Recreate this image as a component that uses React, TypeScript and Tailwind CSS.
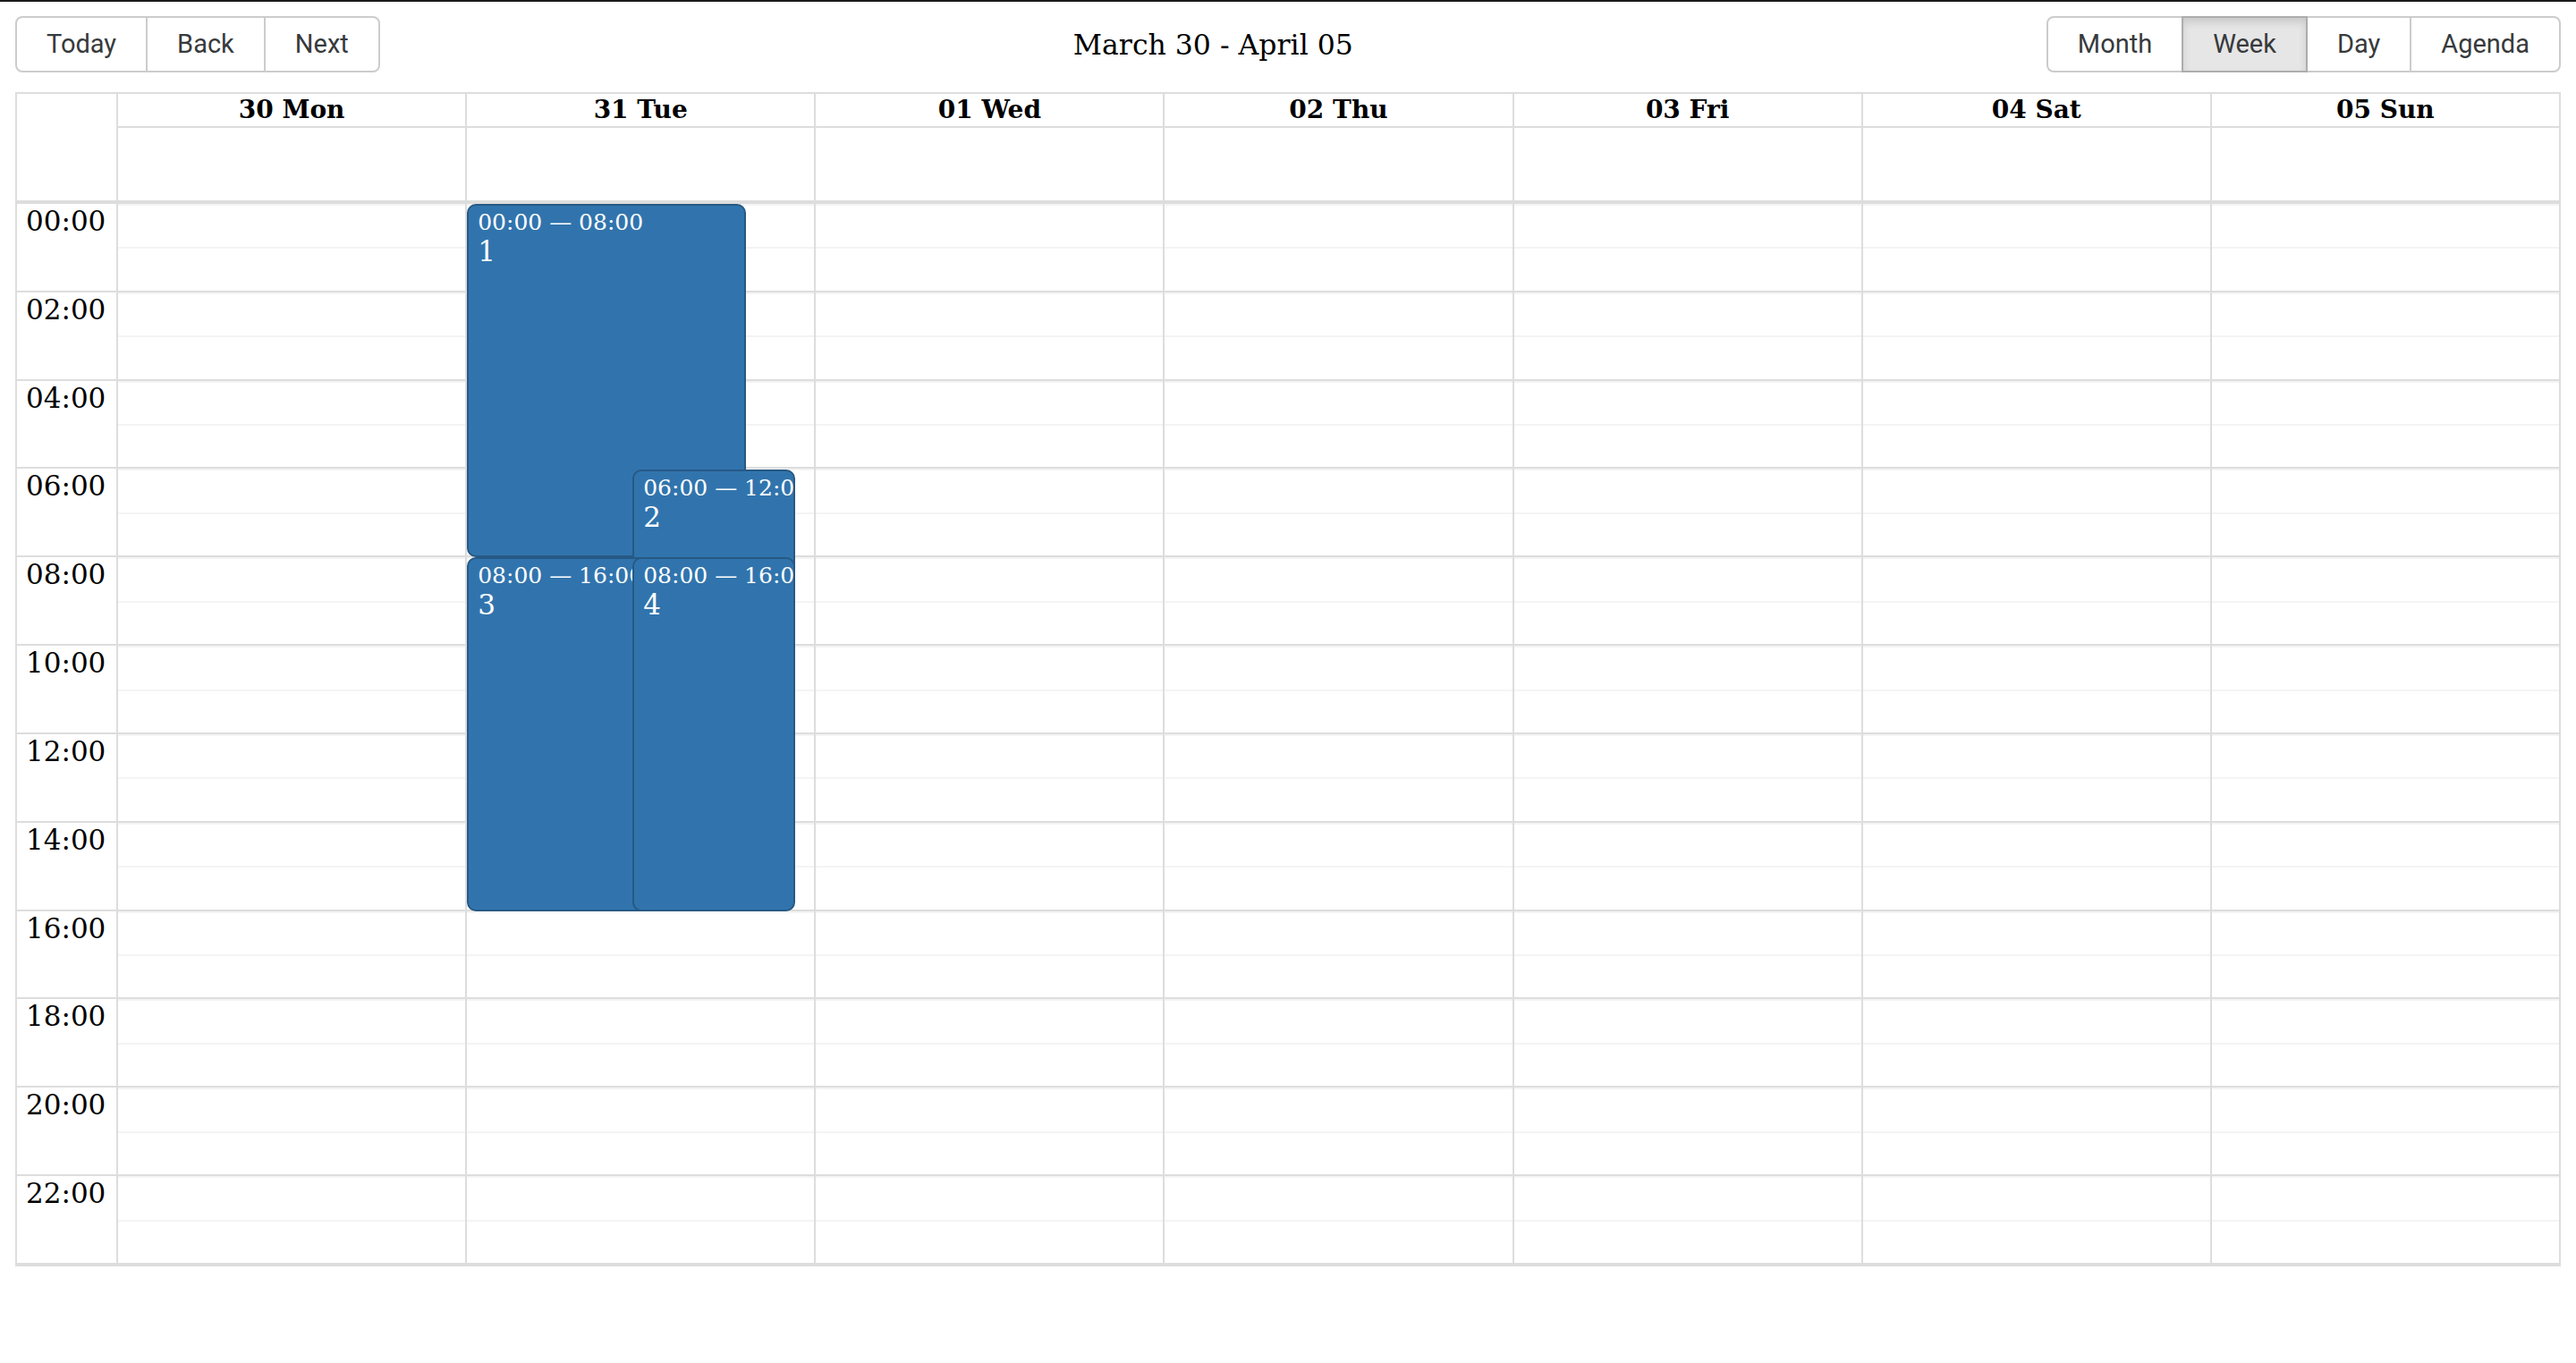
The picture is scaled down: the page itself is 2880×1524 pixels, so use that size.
import React from 'react';

const days = ['30 Mon', '31 Tue', '01 Wed', '02 Thu', '03 Fri', '04 Sat', '05 Sun'];
const hours = ['00:00', '02:00', '04:00', '06:00', '08:00', '10:00', '12:00', '14:00', '16:00', '18:00', '20:00', '22:00'];

// height of the inner time grid, split evenly over 24 hours
const HOUR = 1186 / 24;

interface CalEvent {
  label: string;
  title: string;
  start: number;
  end: number;
  left: number;
  width: number;
}

// all events live on "31 Tue"
const events: CalEvent[] = [
  { label: '00:00 — 08:00', title: '1', start: 0, end: 8, left: 0, width: 312 },
  { label: '06:00 — 12:00', title: '2', start: 6, end: 12, left: 185, width: 182 },
  { label: '08:00 — 16:00', title: '3', start: 8, end: 16, left: 0, width: 312 },
  { label: '08:00 — 16:00', title: '4', start: 8, end: 16, left: 185, width: 182 },
];

const leftViews = ['Today', 'Back', 'Next'];
const rightViews = ['Month', 'Week', 'Day', 'Agenda'];

const ButtonGroup: React.FC<{ items: string[]; active?: string }> = ({ items, active }) => (
  <div className="flex h-[63px]">
    {items.map((item, i) => {
      const isActive = item === active;
      return (
        <button
          key={item}
          className={
            'h-full px-[33px] border-2 text-[29px] text-[#373a3c] font-["Roboto",sans-serif] ' +
            (i === 0 ? 'rounded-l-[8px] ' : '-ml-[2px] ') +
            (i === items.length - 1 ? 'rounded-r-[8px] ' : '') +
            (isActive
              ? 'relative z-10 bg-[#e6e6e6] border-[#adadad] shadow-[inset_0_5px_9px_rgba(0,0,0,0.125)]'
              : 'bg-white border-[#ccc]')
          }
        >
          {item}
        </button>
      );
    })}
  </div>
);

const EventBox: React.FC<{ ev: CalEvent }> = ({ ev }) => (
  <div
    className="absolute bg-[#3174ad] border-2 border-[#265985] rounded-[10px] text-white overflow-hidden px-[10px] pt-[4px]"
    style={{
      top: ev.start * HOUR,
      height: (ev.end - ev.start) * HOUR,
      left: ev.left,
      width: ev.width,
    }}
  >
    <div className="text-[25px] leading-[29px] whitespace-nowrap">{ev.label}</div>
    <div className="text-[31px] leading-[36px]">{ev.title}</div>
  </div>
);

const App: React.FC = () => {
  return (
    <div className="min-h-screen bg-white font-['DejaVu_Serif',serif] text-black">
      <div className="h-[2px] bg-[#1a1a1a]" />

      <div className="px-[17px] pt-[16px]">
        {/* toolbar */}
        <div className="flex items-center">
          <ButtonGroup items={leftViews} />
          <div className="flex-1 pt-[3px] text-center text-[31.5px]">March 30 - April 05</div>
          <ButtonGroup items={rightViews} active="Week" />
        </div>

        {/* week view */}
        <div className="mt-[22px] border-2 border-[#ddd]">
          <div className="flex">
            <div className="w-[111px] shrink-0" />
            {days.map((d) => (
              <div key={d} className="flex-1 border-l-2 border-[#ddd]">
                <div className="h-[38px] border-b-2 border-[#ddd] text-center text-[28px] font-bold leading-[35px]">
                  {d}
                </div>
                <div className="h-[81px]" />
              </div>
            ))}
          </div>

          <div className="flex h-[1190px] border-t-4 border-[#ddd]">
            <div className="w-[111px] shrink-0 flex flex-col">
              {hours.map((h) => (
                <div key={h} className="flex-1 border-b-2 border-[#ddd]">
                  <div className="pl-[10px] pt-[2px] text-[31px] leading-[35px]">{h}</div>
                </div>
              ))}
            </div>
            {days.map((d, di) => (
              <div key={d} className="flex-1 border-l-2 border-[#ddd] relative flex flex-col">
                {hours.map((h) => (
                  <div key={h} className="flex-1 flex flex-col border-b-2 border-[#ddd]">
                    <div className="flex-1 border-t-2 border-[#f4f4f4]" />
                    <div className="flex-1 border-t-2 border-[#f4f4f4]" />
                  </div>
                ))}
                {di === 1 && events.map((ev) => <EventBox key={ev.title} ev={ev} />)}
              </div>
            ))}
          </div>
        </div>
      </div>
    </div>
  );
};

export default App;
